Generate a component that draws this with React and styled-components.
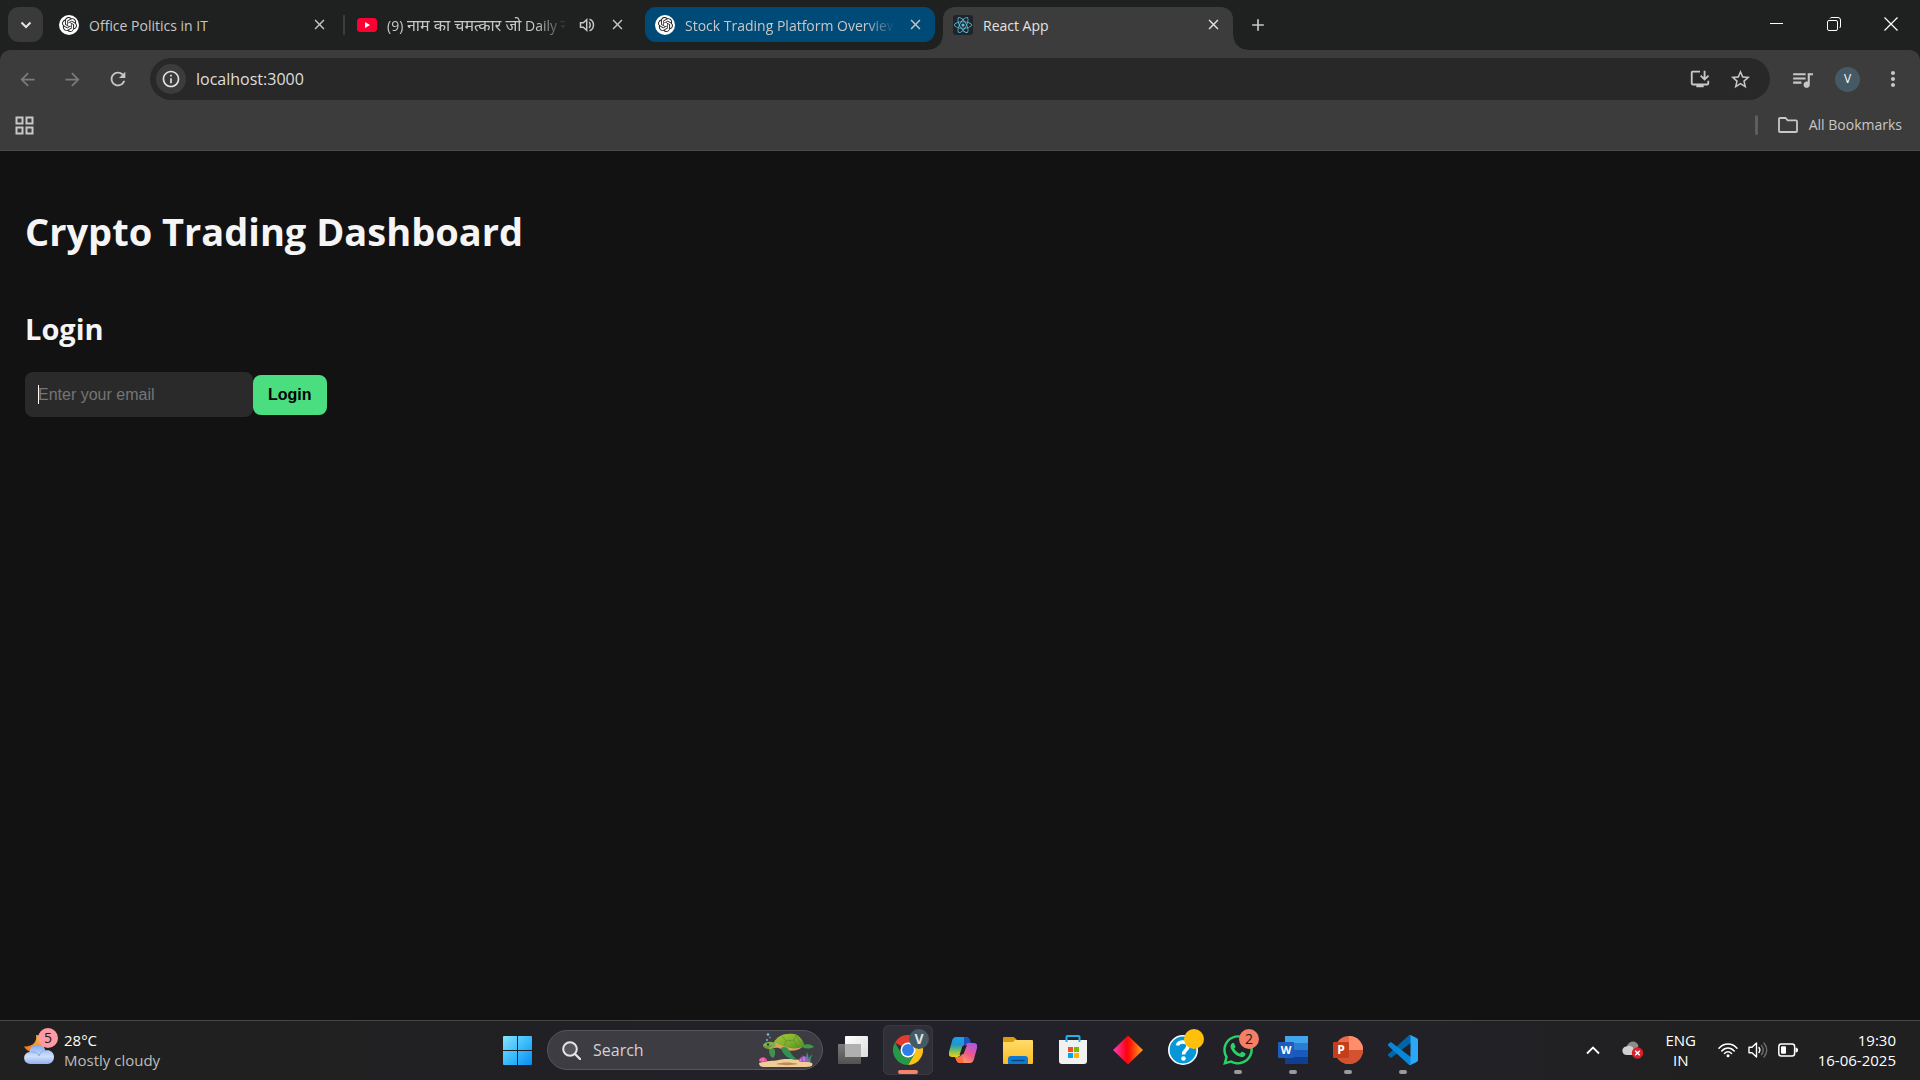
import React from "react";
import styled, { createGlobalStyle, css } from "styled-components";
import {
  MdAdd,
  MdArrowBack,
  MdArrowForward,
  MdClose,
  MdInstallDesktop,
  MdMoreVert,
  MdOutlineInfo,
  MdQueueMusic,
  MdRefresh,
  MdStarOutline,
} from "react-icons/md";
import { SiOpenai } from "react-icons/si";
import { FaReact, FaWhatsapp } from "react-icons/fa";

const GlobalStyle = createGlobalStyle`
  *, *::before, *::after { box-sizing: border-box; }
  body {
    margin: 0;
    background: #121212;
    font-family: "Open Sans", "Noto Sans", sans-serif;
  }
  button, input { font-family: inherit; }
  svg { display: block; flex: none; }
`;

const Screen = styled.div`
  min-height: 100vh;
  display: flex;
  flex-direction: column;
`;

const PlainButton = styled.button`
  display: flex;
  align-items: center;
  justify-content: center;
  flex: none;
  padding: 0;
  border: 0;
  background: transparent;
  color: inherit;
`;

/* ---------- Tab strip ---------- */

const TabStrip = styled.header`
  display: flex;
  align-items: flex-start;
  height: 50px;
  padding: 7px 1px 0 8px;
  background: #1f2120;
  color: #c7c7c7;
`;

const TabSearch = styled(PlainButton)`
  width: 35px;
  height: 35px;
  margin-right: 6px;
  border-radius: 11px;
  background: #3a3a3a;
  color: #e3e3e3;
`;

const TabList = styled.div`
  display: flex;
  gap: 8px;
`;

const Tab = styled.div`
  position: relative;
  display: flex;
  align-items: center;
  width: 290px;
  height: ${(p) => (p.$active ? 43 : 35)}px;
  padding: 0 10px ${(p) => (p.$active ? 8 : 0)}px 10px;
  border-radius: 11px;
  ${(p) =>
    p.$highlight &&
    css`
      background: #004a77;
    `}
  ${(p) =>
    p.$divided &&
    css`
      &::after {
        content: "";
        position: absolute;
        right: -6px;
        top: 8px;
        width: 2px;
        height: 20px;
        background: #3c3c3c;
      }
    `}
  ${(p) =>
    p.$active &&
    css`
      border-radius: 12px 12px 0 0;
      background: #3c3c3c;
      color: #e3e3e3;
      &::before,
      &::after {
        content: "";
        position: absolute;
        bottom: 0;
        width: 14px;
        height: 14px;
      }
      &::before {
        left: -14px;
        background: radial-gradient(circle at 0 0, transparent 13px, #3c3c3c 14px);
      }
      &::after {
        right: -14px;
        background: radial-gradient(circle at 100% 0, transparent 13px, #3c3c3c 14px);
      }
    `}
`;

const TabTitle = styled.span`
  flex: 1;
  min-width: 0;
  margin: 0 10px;
  padding-top: 2px;
  overflow: hidden;
  white-space: nowrap;
  font-size: 14px;
  line-height: 22px;
  ${(p) =>
    p.$fade &&
    css`
      mask-image: linear-gradient(to right, #000 calc(100% - 30px), transparent);
    `}
`;

const Hindi = styled.span`
  font-family: "Noto Sans", sans-serif;
  font-size: 16px;
`;

const TabAudio = styled(PlainButton)`
  width: 20px;
  height: 20px;
  margin-right: 10px;
`;

const TabClose = styled(PlainButton)`
  width: 20px;
  height: 20px;
`;

const Favicon = styled.span`
  display: flex;
  align-items: center;
  justify-content: center;
  flex: none;
  width: 20px;
  height: 20px;
  border-radius: ${(p) => (p.$round ? "50%" : "3px")};
  background: ${(p) => p.$bg || "transparent"};
  color: ${(p) => p.$color || "#222"};
`;

const NewTab = styled(PlainButton)`
  width: 35px;
  height: 35px;
  margin-left: 7px;
`;

const WindowControls = styled.div`
  display: flex;
  margin-left: auto;
  color: #fff;
`;

const WindowButton = styled(PlainButton)`
  width: 57px;
  height: 34px;
`;

/* ---------- Toolbar ---------- */

const ToolbarBackdrop = styled.div`
  background: #1f2120;
`;

const Toolbar = styled.nav`
  display: flex;
  align-items: center;
  padding: 8px 5px 0;
  border-radius: 10px 10px 0 0;
  background: #3c3c3c;
  color: #c7c7c7;
`;

const ToolButton = styled(PlainButton)`
  width: 45px;
  height: 42px;
  color: ${(p) => (p.disabled ? "#7b7b7b" : "#c7c7c7")};
`;

const AddressBar = styled.div`
  display: flex;
  align-items: center;
  flex: 1;
  height: 42px;
  margin: 0 10px;
  padding: 0 10px 0 6px;
  border-radius: 21px;
  background: #282828;
`;

const SiteInfo = styled(PlainButton)`
  width: 30px;
  height: 30px;
  border-radius: 50%;
  background: #3c3c3c;
  color: #e3e3e3;
`;

const AddressInput = styled.input`
  flex: 1;
  min-width: 0;
  padding: 0 10px;
  border: 0;
  outline: 0;
  background: transparent;
  color: #dedede;
  font-size: 16px;
  line-height: 24px;
`;

const AddressAction = styled(PlainButton)`
  width: 40px;
  height: 34px;
`;

const ProfileButton = styled(PlainButton)`
  width: 25px;
  height: 25px;
  margin: 0 10px;
  border-radius: 50%;
  background: #455a64;
  color: #fff;
  font-size: 12px;
  line-height: 16px;
`;

/* ---------- Bookmarks bar ---------- */

const BookmarksBar = styled.div`
  display: flex;
  align-items: center;
  justify-content: space-between;
  height: 51px;
  padding: 0 18px 0 15px;
  border-bottom: 1px solid #4a4a4a;
  background: #3c3c3c;
  color: #c7c7c7;
`;

const BookmarksRight = styled.div`
  display: flex;
  align-items: center;
`;

const BarDivider = styled.span`
  width: 3px;
  height: 20px;
  margin-right: 20px;
  border-radius: 2px;
  background: #5e5e5e;
`;

const AllBookmarks = styled(PlainButton)`
  gap: 11px;
  font-size: 14px;
  line-height: 20px;
`;

/* ---------- Page ---------- */

const Page = styled.main`
  flex: 1;
  padding: 25px;
  background: #121212;
  color: #f5f5f5;
`;

const PageTitle = styled.h1`
  margin: 27px 0 50px;
  font-size: 38px;
  line-height: 56px;
  font-weight: 700;
`;

const SectionTitle = styled.h2`
  margin: 0 0 23px;
  font-size: 29px;
  line-height: 40px;
  font-weight: 700;
`;

const LoginForm = styled.form`
  display: flex;
  align-items: center;
`;

const EmailField = styled.div`
  position: relative;
`;

const EmailInput = styled.input`
  display: block;
  width: 228px;
  height: 45px;
  padding: 0 13px;
  border: 0;
  border-radius: 8px;
  outline: 0;
  background: #2a2a2a;
  color: #fff;
  font-family: "Liberation Sans", Arial, sans-serif;
  font-size: 16px;
  &::placeholder {
    color: #757575;
    opacity: 1;
  }
`;

const Caret = styled.span`
  position: absolute;
  left: 13px;
  top: 13px;
  width: 1px;
  height: 19px;
  background: #fff;
`;

const LoginButton = styled.button`
  height: 40px;
  padding: 0 15px;
  border: 0;
  border-radius: 8px;
  background: #4ade80;
  color: #000;
  font-family: "Liberation Sans", Arial, sans-serif;
  font-size: 16px;
  font-weight: 700;
`;

/* ---------- Taskbar ---------- */

const Taskbar = styled.footer`
  display: grid;
  grid-template-columns: 1fr auto 1fr;
  align-items: center;
  height: 60px;
  padding: 0 24px 1px;
  border-top: 1px solid #474747;
  background: linear-gradient(to right, #202020 12%, #22212a 50%, #222127 72%, #202020 90%);
  color: #fff;
  font-size: 15px;
  line-height: 20px;
`;

const Weather = styled(PlainButton)`
  justify-self: start;
  gap: 10px;
  font-size: 15px;
  line-height: 20px;
  text-align: left;
`;

const WeatherIcon = styled.span`
  position: relative;
  width: 30px;
  height: 40px;
`;

const Stack = styled.span`
  display: flex;
  flex-direction: column;
  align-items: ${(p) => p.$align || "flex-start"};
`;

const Muted = styled.span`
  color: #bdbdbd;
`;

const Badge = styled.span`
  position: absolute;
  top: ${(p) => p.$top || 4}px;
  right: ${(p) => p.$right || 0}px;
  display: flex;
  align-items: center;
  justify-content: center;
  width: 20px;
  height: 20px;
  border-radius: 50%;
  background: ${(p) => p.$bg};
  color: ${(p) => p.$color || "#1c1c1c"};
  font-size: 14px;
  line-height: 20px;
  font-weight: ${(p) => (p.$bold ? 700 : 400)};
`;

const Apps = styled.div`
  display: flex;
  align-items: center;
  gap: 5px;
`;

const AppButton = styled(PlainButton)`
  position: relative;
  width: 50px;
  height: 50px;
  border-radius: 6px;
  ${(p) =>
    p.$active &&
    css`
      background: #302f37;
      box-shadow: inset 0 0 0 1px #393840;
    `}
`;

const Indicator = styled.span`
  position: absolute;
  left: 50%;
  bottom: 1px;
  width: ${(p) => (p.$active ? 20 : 8)}px;
  height: 4px;
  border-radius: 2px;
  background: ${(p) => (p.$active ? "#f4846a" : "#9a9a9d")};
  transform: translateX(-50%);
`;

const SearchBox = styled.label`
  display: flex;
  align-items: center;
  width: 276px;
  height: 40px;
  padding: 0 8px 0 14px;
  border: 1px solid #57555c;
  border-radius: 20px;
  background: #3e3c43;
`;

const SearchInput = styled.input`
  flex: 1;
  min-width: 0;
  padding: 0 0 0 12px;
  border: 0;
  outline: 0;
  background: transparent;
  color: #fff;
  font-size: 16px;
  line-height: 24px;
  &::placeholder {
    color: #d2d1d3;
    opacity: 1;
  }
`;

const Tray = styled.div`
  display: flex;
  align-items: center;
  justify-self: end;
`;

const TrayButton = styled(PlainButton)`
  width: 40px;
  height: 40px;
  font-size: 15px;
  line-height: 20px;
`;

const Language = styled(TrayButton)`
  width: 56px;
`;

const QuickSettings = styled(PlainButton)`
  gap: 10px;
  height: 40px;
  margin-left: 9px;
`;

const Clock = styled(PlainButton)`
  margin-left: 20px;
  font-size: 15px;
  line-height: 20px;
`;

/* ---------- Drawings ---------- */

const ChevronDown = () => (
  <svg width="14" height="14" viewBox="0 0 14 14" fill="none" stroke="currentColor" strokeWidth="2">
    <path d="M2.500 4.500 7 9l4.500-4.500" />
  </svg>
);

const YouTubeLogo = () => (
  <svg width="20" height="14" viewBox="0 0 20 14">
    <rect width="20" height="14" rx="3.500" fill="#ff0033" />
    <path d="M8 4v6l5-3z" fill="#fff" />
  </svg>
);

const TabSpeaker = () => (
  <svg width="16" height="16" viewBox="0 0 16 16" fill="none" stroke="currentColor" strokeWidth="1.500">
    <path d="M1.500 5.700v4.600h2.800L7.700 13.300V2.700L4.300 5.700z" />
    <path d="M10 5.200c1.700 1.100 1.700 4.500 0 5.600M10.500 2.200c5.300 1.800 5.300 9.800 0 11.600" />
  </svg>
);

const MinimizeIcon = () => (
  <svg width="13" height="13" viewBox="0 0 13 13" stroke="currentColor">
    <path d="M0 5.500h13" />
  </svg>
);

const RestoreIcon = () => (
  <svg width="14" height="14" viewBox="0 0 14 14" fill="none" stroke="currentColor">
    <rect x=".5" y="3.500" width="10" height="10" rx="1.500" />
    <path d="M3 1.500Q3.500.5 5 .5h6q2.500 0 2.500 2.500v6q0 1.500-1 2" />
  </svg>
);

const WindowCloseIcon = () => (
  <svg width="14" height="14" viewBox="0 0 14 14" stroke="currentColor" strokeWidth="1.200">
    <path d="m.5.500 13 13M13.500.500l-13 13" />
  </svg>
);

const AppsGridIcon = () => (
  <svg width="19" height="19" viewBox="0 0 19 19" fill="none" stroke="currentColor" strokeWidth="2">
    <path d="M1.500 1.500h6v6h-6zM11.500 1.500h6v6h-6zM1.500 11.500h6v6h-6zM11.500 11.500h6v6h-6z" />
  </svg>
);

const FolderOutline = () => (
  <svg width="20" height="16" viewBox="0 0 20 16" fill="none" stroke="currentColor" strokeWidth="1.800">
    <path d="M1 2q0-1 1-1h5.500l2.200 2.300H18q1 0 1 1V14q0 1-1 1H2q-1 0-1-1z" />
  </svg>
);

const WeatherDrawing = () => (
  <svg width="30" height="40" viewBox="0 0 30 40">
    <defs>
      <linearGradient id="moon" x1="0" y1="1" x2="1" y2="0">
        <stop offset="0" stopColor="#f26b1d" />
        <stop offset="1" stopColor="#fbc531" />
      </linearGradient>
      <linearGradient id="cloud" x1="0" y1="0" x2="0" y2="1">
        <stop offset="0" stopColor="#7fa9f0" />
        <stop offset=".6" stopColor="#cfdffb" />
        <stop offset="1" stopColor="#8fb2ef" />
      </linearGradient>
    </defs>
    <path d="M12 5c1.500 6-3 12-12 11.500C3 22 10 24 16 21s9-12 3-15z" fill="url(#moon)" />
    <path d="M6.500 34a6 6 0 0 1-.8-12C6 13 19 12.500 21.500 20.500c4-1 8.500 1.500 8.500 6.500 0 4-3 7-6.500 7z" fill="url(#cloud)" />
    <path d="M7 22c4-.5 7 1 8 4 1-3.500 3.500-5.500 6.500-5.500" fill="none" stroke="#88abed" />
  </svg>
);

const WindowsLogo = () => (
  <svg width="29" height="29" viewBox="0 0 29 29">
    <defs>
      <linearGradient id="win" x1="0" y1="0" x2="1" y2="1">
        <stop offset="0" stopColor="#86e3ff" />
        <stop offset=".5" stopColor="#3cbcfb" />
        <stop offset="1" stopColor="#0a8cf5" />
      </linearGradient>
    </defs>
    <path d="M1 0h13v14H0V1q0-1 1-1zM15 0h13q1 0 1 1v13H15zM0 15h14v14H1q-1 0-1-1zM15 15h14v13q0 1-1 1H15z" fill="url(#win)" />
  </svg>
);

const MagnifierIcon = () => (
  <svg width="19" height="19" viewBox="0 0 19 19" fill="none" stroke="#e4e4e6" strokeWidth="2" strokeLinecap="round">
    <circle cx="8" cy="8" r="6.800" fill="#56545b" />
    <path d="m13 13 5 5" strokeWidth="2.400" />
  </svg>
);

const TurtleDrawing = () => (
  <svg width="55" height="34" viewBox="0 0 55 34">
    <defs>
      <linearGradient id="shell" x1="0" y1="0" x2="1" y2="1">
        <stop offset="0" stopColor="#a9c73a" />
        <stop offset=".6" stopColor="#79ad2c" />
        <stop offset="1" stopColor="#4a8a2d" />
      </linearGradient>
    </defs>
    <path d="M0 30c9-3 14-1.500 22-3.500 11-1.500 24 1 31 3.500 2 4-3 4-9 4H6c-4 0-6-1-6-4z" fill="#f0cc98" />
    <path d="M17 31c6 1.500 16 1.500 22 0-7-2-16-2-22 0z" fill="#bf8a55" />
    <path d="M43 13c5-3 9-2 12 1-4 2-8 2-12 0z" fill="#3c9a48" />
    <path d="M10 16c0 5 1 8 4.500 9 2-3 2-6 1-9z" fill="#3f9448" />
    <path d="M14 10c2-2 6-1 9 2l21 1c-3 5-14 6-22 3-3-2-6-1-9-1z" fill="#dfa25a" />
    <path d="M15 9C18 3 26-.5 35 1c6 1 9 7 11 12-6 3-13 3-19 1-4-1.500-8-3-12-5z" fill="url(#shell)" />
    <path d="m23 3 4 5-2 5M27 8l8-1 3 7M35 7l2-5M37 2l3 6 5 3" fill="none" stroke="#5d8f28" strokeWidth=".7" />
    <path d="M22 15c3-2 6-1 8 2 2 4 5 7 8 10-7 0-14-4-16-12z" fill="#2f9152" />
    <path d="M4 12c1-3 7-4.500 12-2 2 3-1 6-4 6-4 0-8-1-8-4z" fill="#84b047" />
    <path d="M4.500 13.500c3 1 5 1 8-1" stroke="#4b7c38" strokeWidth=".8" fill="none" />
    <circle cx="9" cy="11.500" r="1.200" fill="#24442f" />
    <path d="M45 29q0-5-2-7 4 2 4 5 0-4 1-8 2 4 1.500 8 1-4 4-6-2 3-2 8z" fill="#2b9c72" />
    <path d="M0 28c0-5 8-5 8 0-1 1.500-7 1.500-8 0z" fill="#ee4fa0" />
    <path d="M40 28c0-6 9-6 10-1-1 2.500-9 2.500-10 1z" fill="#a05bc4" />
    <path d="M4 28v-3M2 27.500l-1-1.500M45 28v-4M42 28l-1-2" stroke="#fbb2d9" strokeWidth=".7" />
    <circle cx="9" cy="1.500" r="1.300" fill="#5cc3ee" />
    <circle cx="8" cy="7" r="1" fill="#5cc3ee" />
    <circle cx="11" cy="4.500" r=".7" fill="#5cc3ee" />
  </svg>
);

const TaskViewIcon = () => (
  <svg width="30" height="28" viewBox="0 0 30 28">
    <defs>
      <linearGradient id="tv" x1="0" y1="0" x2="1" y2="1">
        <stop offset="0" stopColor="#fff" />
        <stop offset="1" stopColor="#dcdcdc" />
      </linearGradient>
      <linearGradient id="tb" x1="0" y1="0" x2="0" y2="1">
        <stop offset="0" stopColor="#7a7a7a" />
        <stop offset="1" stopColor="#525252" />
      </linearGradient>
    </defs>
    <rect y="8" width="23" height="20" rx="1" fill="url(#tb)" />
    <rect x="7" width="23" height="21" rx="1" fill="url(#tv)" />
    <rect x="7" y="8" width="16" height="13" fill="#b0b0b0" />
  </svg>
);

const ChromeLogo = () => (
  <svg width="30" height="30" viewBox="0 0 48 48">
    <path d="M24 24 3.200 12A24 24 0 0 1 44.800 12z" fill="#e33b2e" />
    <path d="M24 12h20.800A24 24 0 0 1 24 48l10.400-18z" fill="#fbc116" />
    <path d="M34.400 30 24 48A24 24 0 0 1 3.200 12l10.400 18z" fill="#279847" />
    <circle cx="24" cy="24" r="12" fill="#fff" />
    <circle cx="24" cy="24" r="9.500" fill="#2f7de9" />
  </svg>
);

const CopilotLogo = () => (
  <svg width="28" height="26" viewBox="0 0 28 26">
    <defs>
      <linearGradient id="cpa" x1="0" y1="0" x2="0" y2="1">
        <stop offset="0" stopColor="#1a9df0" />
        <stop offset=".4" stopColor="#2397c8" />
        <stop offset=".7" stopColor="#7bc15a" />
        <stop offset="1" stopColor="#f3cf12" />
      </linearGradient>
      <linearGradient id="cpb" x1=".8" y1="0" x2=".2" y2="1">
        <stop offset="0" stopColor="#ad55ea" />
        <stop offset=".5" stopColor="#ee5b86" />
        <stop offset="1" stopColor="#ffab60" />
      </linearGradient>
    </defs>
    <path d="M7 0h10q3 0 4 4l1 3h-5q-2 0-3 3l-2 7q-1 3-4 3H3q-4 0-3-5L3 4Q4 0 7 0z" fill="url(#cpa)" />
    <path d="M15 0h2q3 0 4 4l1 3h-5q-1 0-2 1z" fill="#1c51c6" />
    <path d="M21 26H11q-3 0-4-4l-1-2h4q2 0 3-3l3-8q1-3 4-3h5q4 0 3 5l-3 11q-1 4-4 4z" fill="url(#cpb)" />
    <path d="M11 26q-3 0-4-4l-1-2h4q2 0 3-2l2 8z" fill="#fa7042" />
    <path d="m13.500 9-3 9 4-1 3.500-9z" fill="#22212a" />
  </svg>
);

const ExplorerIcon = () => (
  <svg width="30" height="27" viewBox="0 0 30 27">
    <defs>
      <linearGradient id="fold" x1="0" y1="0" x2="0" y2="1">
        <stop offset="0" stopColor="#ffdc6b" />
        <stop offset="1" stopColor="#fbbc20" />
      </linearGradient>
    </defs>
    <path d="M0 8V1q0-1 1-1h9q1 0 2 1l2 2v5z" fill="#dc9c0c" />
    <path d="M0 5h10l2-2h17q1 0 1 1v22q0 1-1 1H1q-1 0-1-1z" fill="url(#fold)" />
    <path d="M5 27v-5q0-3 3-3h14q3 0 3 3v5z" fill="#0f78d0" />
    <path d="M8.500 23.500h13" stroke="#074481" strokeWidth="1.400" />
  </svg>
);

const StoreIcon = () => (
  <svg width="30" height="30" viewBox="0 0 30 30">
    <path d="M8.500 7V2q0-1 1-1h11q1 0 1 1v5" fill="none" stroke="#20b3ee" strokeWidth="2" />
    <path d="M1 5h28v21q0 3-3 3H4q-3 0-3-3z" fill="#f1f1f1" />
    <path d="M8.500 5v2M21.500 5v2" stroke="#20b3ee" strokeWidth="2" />
    <path d="M10 12h5v5h-5z" fill="#f05022" />
    <path d="M16 12h5v5h-5z" fill="#7db900" />
    <path d="M10 18h5v5h-5z" fill="#00a3ee" />
    <path d="M16 18h5v5h-5z" fill="#feb800" />
  </svg>
);

const DiamondIcon = () => (
  <svg width="30" height="30" viewBox="0 0 30 30">
    <defs>
      <linearGradient id="dia">
        <stop offset="0" stopColor="#ff3cc0" />
        <stop offset=".45" stopColor="#fb0410" />
        <stop offset=".55" stopColor="#ff1408" />
        <stop offset="1" stopColor="#ffa81c" />
      </linearGradient>
    </defs>
    <path d="M15 .5 30 15 15 29.500 0 15z" fill="url(#dia)" />
  </svg>
);

const HelpIcon = () => (
  <svg width="30" height="30" viewBox="0 0 30 30">
    <circle cx="15" cy="15" r="14.200" fill="#0597d8" stroke="#fff" strokeWidth="1.600" />
    <path d="M9.500 10.500C10 6 20 5.500 20 11c0 4-4.500 4-4.500 8.500" fill="none" stroke="#fff" strokeWidth="3.600" />
    <circle cx="15.500" cy="23.500" r="2.300" fill="#fff" />
  </svg>
);

const WordIcon = () => (
  <svg width="30" height="28" viewBox="0 0 30 28">
    <path d="M7 0h23v7H7z" fill="#41a5ee" />
    <path d="M7 7h23v7H7z" fill="#2b7cd3" />
    <path d="M7 14h23v7H7z" fill="#185abd" />
    <path d="M7 21h23v7H7z" fill="#103f91" />
    <rect y="6" width="16" height="16" rx="1" fill="#1b5cbe" />
    <text x="8" y="18" textAnchor="middle" fontFamily="Open Sans, sans-serif" fontSize="11" fontWeight="700" fill="#fff">
      W
    </text>
  </svg>
);

const PowerPointIcon = () => (
  <svg width="30" height="28" viewBox="0 0 30 28">
    <circle cx="16" cy="14" r="14" fill="#ed6c47" />
    <path d="M16 0a14 14 0 0 1 14 14H16z" fill="#ff8f6b" />
    <path d="M2 14h28a14 14 0 0 1-28 0z" fill="#d35230" />
    <rect y="6" width="16" height="16" rx="1" fill="#c43e1c" />
    <text x="8" y="18" textAnchor="middle" fontFamily="Open Sans, sans-serif" fontSize="12" fontWeight="700" fill="#fff">
      P
    </text>
  </svg>
);

const CodeIcon = () => (
  <svg width="30" height="30" viewBox="0 0 100 100">
    <path d="M96.461 10.796 75.857.876a6.230 6.230 0 0 0-7.107 1.207l-67.451 61.500a4.167 4.167 0 0 0 .004 6.162l5.510 5.009a4.167 4.167 0 0 0 5.320.236l81.228-61.620c2.725-2.067 6.639-.124 6.639 3.297v-.240a6.250 6.250 0 0 0-3.539-5.630z" fill="#0065a9" />
    <path d="m96.461 89.204-20.604 9.920a6.229 6.229 0 0 1-7.107-1.207l-67.451-61.500a4.167 4.167 0 0 1 .004-6.162l5.510-5.009a4.167 4.167 0 0 1 5.320-.236l81.228 61.620c2.725 2.067 6.639.124 6.639-3.297v.240a6.250 6.250 0 0 1-3.539 5.630z" fill="#0a86d6" />
    <path d="M75.858 99.126a6.232 6.232 0 0 1-7.108-1.210c2.306 2.307 6.250.674 6.250-2.588V4.672c0-3.262-3.944-4.895-6.250-2.589a6.232 6.232 0 0 1 7.108-1.210l20.600 9.908A6.250 6.250 0 0 1 100 16.413v67.174a6.250 6.250 0 0 1-3.541 5.633z" fill="#2aa7f5" />
  </svg>
);

const ChevronUp = () => (
  <svg width="14" height="9" viewBox="0 0 14 9" fill="none" stroke="#fff" strokeWidth="1.800">
    <path d="m1 7.500 6-6 6 6" />
  </svg>
);

const CloudErrorIcon = () => (
  <svg width="22" height="18" viewBox="0 0 22 18">
    <path d="M5 5C7-1 15-1 16.500 5l-5 8z" fill="#8c8c8c" />
    <path d="M5 14C-1 14-1 6 4 5.500c3-1.500 5-.5 7 1l2 7.500z" fill="#d0d0d0" />
    <circle cx="15.500" cy="12" r="5.700" fill="#dd1f2c" />
    <path d="m13.200 9.700 4.600 4.600m0-4.600-4.600 4.600" stroke="#fff" strokeWidth="1.500" />
  </svg>
);

const WifiIcon = () => (
  <svg width="20" height="16" viewBox="0 0 20 16" fill="none" stroke="#fff" strokeWidth="1.500" strokeLinecap="round">
    <path d="M1 6.300c5-5.600 13-5.600 18 0M3.800 9c3.500-4 8.900-4 12.400 0M6.500 11.500c2-2.300 5-2.300 7 0" />
    <circle cx="10" cy="13.700" r="1.500" fill="#fff" stroke="none" />
  </svg>
);

const VolumeIcon = () => (
  <svg width="20" height="18" viewBox="0 0 20 18" fill="none" stroke="#fff" strokeWidth="1.400" strokeLinecap="round" strokeLinejoin="round">
    <path d="M1 6.300v5.400h3L8.500 16V2L4 6.300z" />
    <path d="M11 6.500q1.800 2.500 0 5" />
    <path d="M13.500 4.300q3.500 4.700 0 9.400M16 2q5.500 7 0 14" stroke="#6c6c6c" />
  </svg>
);

const BatteryIcon = () => (
  <svg width="20" height="14" viewBox="0 0 20 14">
    <rect x=".8" y="1" width="15.800" height="12" rx="2.500" fill="none" stroke="#fff" strokeWidth="1.500" />
    <rect x="3" y="3.300" width="5" height="7.400" rx="1" fill="#fff" />
    <path d="M17.500 4.500q2.500 0 2.500 2.500t-2.500 2.500z" fill="#fff" />
  </svg>
);

const OpenAIFavicon = () => (
  <Favicon $round $bg="#fff">
    <SiOpenai size={15} />
  </Favicon>
);

/* ---------- Data ---------- */

const TABS = [
  { id: "office", title: "Office Politics in IT", icon: <OpenAIFavicon />, divided: true },
  {
    id: "video",
    title: (
      <>
        (9) <Hindi lang="hi">नाम का चमत्कार जो</Hindi> Daily <Hindi lang="hi">न</Hindi>
      </>
    ),
    icon: (
      <Favicon>
        <YouTubeLogo />
      </Favicon>
    ),
    audio: true,
    fade: true,
  },
  {
    id: "stock",
    title: "Stock Trading Platform Overview",
    icon: <OpenAIFavicon />,
    highlight: true,
    fade: true,
  },
  {
    id: "react",
    title: "React App",
    icon: (
      <Favicon $bg="#20232a" $color="#58c4dc">
        <FaReact size={18} />
      </Favicon>
    ),
    active: true,
  },
];

const APPS = [
  { name: "Task view", icon: <TaskViewIcon /> },
  {
    name: "Google Chrome",
    icon: <ChromeLogo />,
    active: true,
    running: true,
    badge: { text: "V", bg: "#455a64", color: "#dfe4e6", bold: true },
  },
  { name: "Copilot", icon: <CopilotLogo /> },
  { name: "File Explorer", icon: <ExplorerIcon /> },
  { name: "Microsoft Store", icon: <StoreIcon /> },
  { name: "Diamond", icon: <DiamondIcon /> },
  { name: "Help", icon: <HelpIcon />, badge: { text: "", bg: "#ffbf0b" } },
  {
    name: "WhatsApp",
    icon: <FaWhatsapp size={34} color="#25d366" />,
    running: true,
    badge: { text: "2", bg: "#f47e66" },
  },
  { name: "Word", icon: <WordIcon />, running: true },
  { name: "PowerPoint", icon: <PowerPointIcon />, running: true },
  { name: "Visual Studio Code", icon: <CodeIcon />, running: true },
];

export default function App() {
  return (
    <Screen>
      <GlobalStyle />
      <TabStrip>
        <TabSearch aria-label="Search tabs">
          <ChevronDown />
        </TabSearch>
        <TabList role="tablist">
          {TABS.map((tab) => (
            <Tab
              key={tab.id}
              role="tab"
              aria-selected={Boolean(tab.active)}
              $active={tab.active}
              $highlight={tab.highlight}
              $divided={tab.divided}
            >
              {tab.icon}
              <TabTitle $fade={tab.fade}>{tab.title}</TabTitle>
              {tab.audio && (
                <TabAudio aria-label="Mute tab">
                  <TabSpeaker />
                </TabAudio>
              )}
              <TabClose aria-label="Close tab">
                <MdClose size={17} />
              </TabClose>
            </Tab>
          ))}
        </TabList>
        <NewTab aria-label="New tab">
          <MdAdd size={20} />
        </NewTab>
        <WindowControls>
          <WindowButton aria-label="Minimize">
            <MinimizeIcon />
          </WindowButton>
          <WindowButton aria-label="Restore">
            <RestoreIcon />
          </WindowButton>
          <WindowButton aria-label="Close window">
            <WindowCloseIcon />
          </WindowButton>
        </WindowControls>
      </TabStrip>

      <ToolbarBackdrop>
        <Toolbar>
          <ToolButton aria-label="Back" disabled>
            <MdArrowBack size={21} />
          </ToolButton>
          <ToolButton aria-label="Forward" disabled>
            <MdArrowForward size={21} />
          </ToolButton>
          <ToolButton aria-label="Reload">
            <MdRefresh size={22} />
          </ToolButton>
          <AddressBar>
            <SiteInfo aria-label="Site information">
              <MdOutlineInfo size={20} />
            </SiteInfo>
            <AddressInput aria-label="Address" defaultValue="localhost:3000" />
            <AddressAction aria-label="Install app">
              <MdInstallDesktop size={22} />
            </AddressAction>
            <AddressAction aria-label="Bookmark this page">
              <MdStarOutline size={23} />
            </AddressAction>
          </AddressBar>
          <ToolButton aria-label="Media controls">
            <MdQueueMusic size={25} />
          </ToolButton>
          <ProfileButton aria-label="Profile V">V</ProfileButton>
          <ToolButton aria-label="Menu">
            <MdMoreVert size={24} />
          </ToolButton>
        </Toolbar>
      </ToolbarBackdrop>

      <BookmarksBar>
        <PlainButton aria-label="Apps">
          <AppsGridIcon />
        </PlainButton>
        <BookmarksRight>
          <BarDivider />
          <AllBookmarks>
            <FolderOutline />
            All Bookmarks
          </AllBookmarks>
        </BookmarksRight>
      </BookmarksBar>

      <Page>
        <PageTitle>Crypto Trading Dashboard</PageTitle>
        <SectionTitle id="login-title">Login</SectionTitle>
        <LoginForm aria-labelledby="login-title" onSubmit={(event) => event.preventDefault()}>
          <EmailField>
            <EmailInput type="email" aria-label="Email" placeholder="Enter your email" />
            <Caret />
          </EmailField>
          <LoginButton type="submit">Login</LoginButton>
        </LoginForm>
      </Page>

      <Taskbar>
        <Weather>
          <WeatherIcon>
            <WeatherDrawing />
            <Badge $bg="#fd9aa5" $top={-2} $right={-4}>
              5
            </Badge>
          </WeatherIcon>
          <Stack>
            <span>28°C</span>
            <Muted>Mostly cloudy</Muted>
          </Stack>
        </Weather>

        <Apps>
          <AppButton aria-label="Start">
            <WindowsLogo />
          </AppButton>
          <SearchBox>
            <MagnifierIcon />
            <SearchInput aria-label="Search" placeholder="Search" />
            <TurtleDrawing />
          </SearchBox>
          {APPS.map((app) => (
            <AppButton key={app.name} aria-label={app.name} $active={app.active}>
              {app.icon}
              {app.badge && (
                <Badge $bg={app.badge.bg} $color={app.badge.color} $bold={app.badge.bold} $right={4}>
                  {app.badge.text}
                </Badge>
              )}
              {app.running && <Indicator $active={app.active} />}
            </AppButton>
          ))}
        </Apps>

        <Tray>
          <TrayButton aria-label="Show hidden icons">
            <ChevronUp />
          </TrayButton>
          <TrayButton aria-label="OneDrive">
            <CloudErrorIcon />
          </TrayButton>
          <Language>
            <Stack $align="center">
              <span>ENG</span>
              <span>IN</span>
            </Stack>
          </Language>
          <QuickSettings aria-label="Quick settings">
            <WifiIcon />
            <VolumeIcon />
            <BatteryIcon />
          </QuickSettings>
          <Clock>
            <Stack $align="flex-end">
              <span>19:30</span>
              <span>16-06-2025</span>
            </Stack>
          </Clock>
        </Tray>
      </Taskbar>
    </Screen>
  );
}
